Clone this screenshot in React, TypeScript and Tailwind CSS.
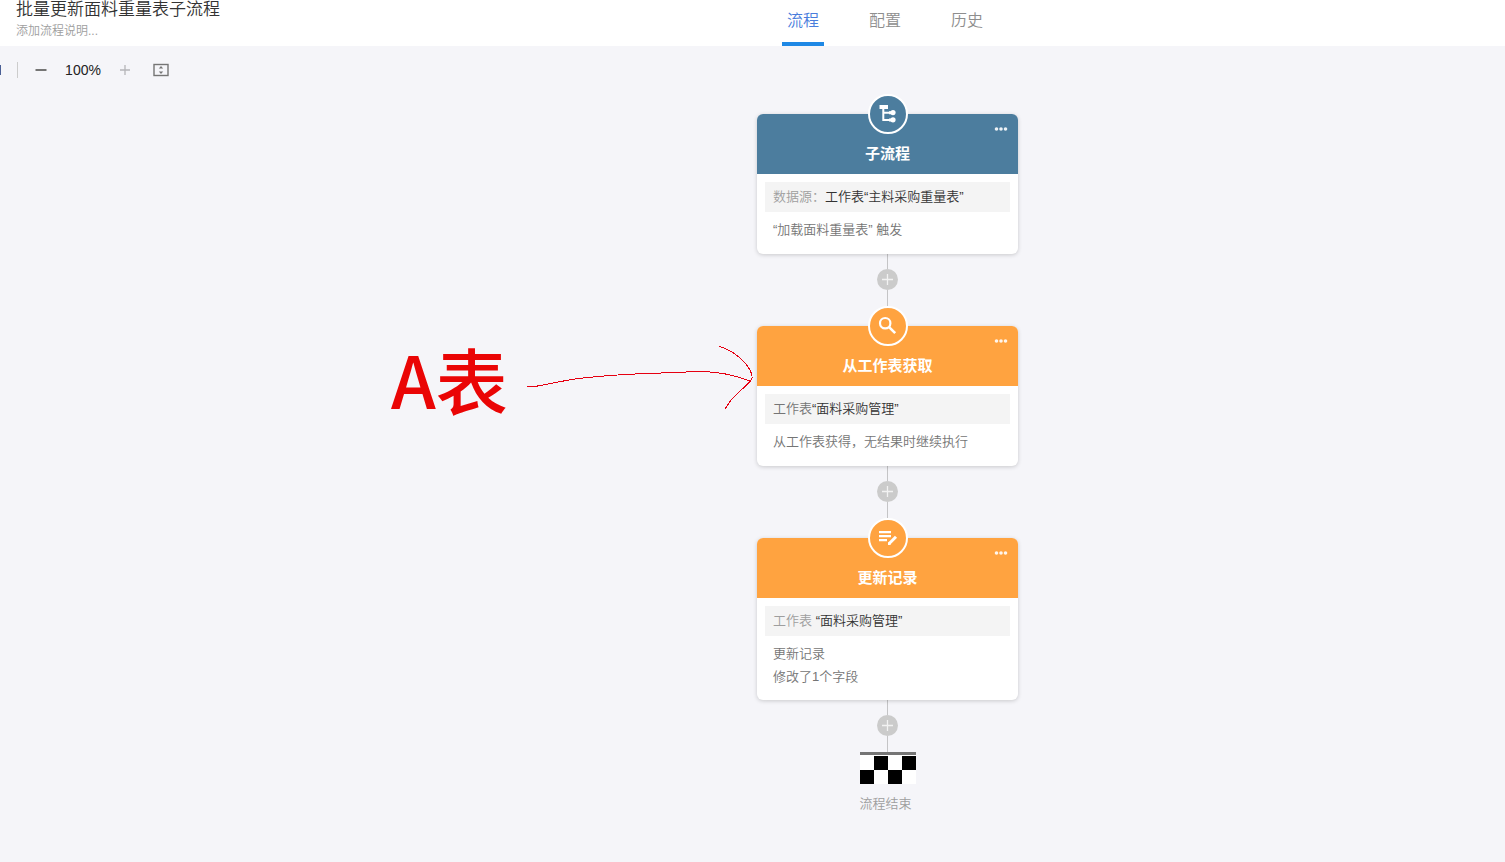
import React from "react";

type Tone = "blue" | "orange";

const toneClass: Record<Tone, string> = {
  blue: "bg-[#4c7d9e]",
  orange: "bg-[#ffa340]",
};

function SubprocessIcon() {
  return (
    <svg width="20" height="20" viewBox="0 0 20 20" fill="none" aria-hidden="true">
      <path d="M1.500 1h8.500v4H1.500z" fill="white" />
      <path d="M5.300 4v12H14M5.300 8.800H14" stroke="white" strokeWidth="2" />
      <circle cx="15" cy="8.600" r="2.600" fill="white" />
      <circle cx="15" cy="15.800" r="2.600" fill="white" />
      <path d="M11 7.200h4v3h-4zM11 14.400h4v3h-4z" fill="white" />
    </svg>
  );
}

function SearchIcon() {
  return (
    <svg width="20" height="20" viewBox="0 0 20 20" fill="none" aria-hidden="true">
      <circle cx="7.200" cy="7.200" r="5.200" stroke="white" strokeWidth="2.200" />
      <path d="M10.800 10.800l6.400 6.400" stroke="white" strokeWidth="2.600" />
    </svg>
  );
}

function EditIcon() {
  return (
    <svg width="20" height="20" viewBox="0 0 20 20" fill="none" aria-hidden="true">
      <path d="M1 4.200h12M1 8.200h12M1 12.200h8" stroke="white" strokeWidth="2.200" />
      <path d="M11 15.800l7-7" stroke="white" strokeWidth="3" />
      <path d="M10 17v-3l3 3z" fill="white" />
    </svg>
  );
}

function Connector() {
  return (
    <div className="flex h-[52px] flex-col items-center">
      <div className="h-[15px] w-px bg-[#c4c4c6]" />
      <button type="button" aria-label="添加节点" className="flex size-[21px] items-center justify-center rounded-full bg-[#cbcbcb]">
        <svg width="11" height="11" viewBox="0 0 11 11" aria-hidden="true">
          <path d="M5.500 0v11M0 5.500h11" stroke="#f2f2f2" strokeWidth="1.300" />
        </svg>
      </button>
      <div className="w-px grow bg-[#c4c4c6]" />
    </div>
  );
}

interface NodeProps {
  tone: Tone;
  icon: React.ReactNode;
  title: string;
  source: React.ReactNode;
  children: React.ReactNode;
}

function FlowNode({ tone, icon, title, source, children }: NodeProps) {
  return (
    <section className="relative w-[261px] rounded-md bg-white shadow-[0_1px_4px_rgba(0,0,0,0.18)]">
      <header className={`flex h-[60px] items-end justify-center rounded-t-md pb-2 ${toneClass[tone]}`}>
        <h2 className="text-[15px] leading-6 font-bold text-white">{title}</h2>
      </header>
      <div className={`absolute -top-5 left-1/2 flex size-10 -translate-x-1/2 items-center justify-center rounded-full border-2 border-white ${toneClass[tone]}`}>
        {icon}
      </div>
      <button type="button" aria-label="更多" className="absolute top-[7px] right-2 flex h-4 w-[18px] items-center justify-center">
        <svg width="14" height="4" viewBox="0 0 14 4" fill="#fff" fillOpacity="0.9" aria-hidden="true">
          <circle cx="2.500" cy="2" r="1.800" />
          <circle cx="7" cy="2" r="1.800" />
          <circle cx="11.500" cy="2" r="1.800" />
        </svg>
      </button>
      <div className="min-h-20 px-2 pt-2 pb-3 text-[13px]">
        <p className="h-[30px] bg-[#f4f4f4] px-2 leading-[30px] text-[#333]">{source}</p>
        <div className="px-2 pt-[6px] leading-[23px] text-[#757575]">{children}</div>
      </div>
    </section>
  );
}

function Annotation() {
  return (
    <div className="absolute top-5 right-full flex w-[370px]">
      <span className="absolute top-0 left-1 font-['Noto_Sans_CJK_SC'] text-[72px] leading-[104px] font-medium whitespace-nowrap text-[#ea0505]">A表</span>
      <svg className="absolute top-4 right-0" width="234" height="72" viewBox="0 0 234 72" fill="none" stroke="#e60012" shapeRendering="crispEdges" aria-hidden="true">
        <path d="M4 44.500H12L30 41C45 38 55 36 70 35C100 32 130 31 160 30.500L168 29L180 29.500C198 30 212 33 228 39.500" />
        <path d="M196 4.500C210 8 222 19 227 28C230 34 230 37 226 40.500L208 58L202 67" />
      </svg>
    </div>
  );
}

export default function App() {
  return (
    <div lang="zh-CN" className="flex min-h-screen flex-col bg-[#f5f5f9] font-['Liberation_Sans','Noto_Sans_CJK_SC',sans-serif] font-[350] text-[#333]">
      <header className="flex h-[46px] bg-white">
        <div className="w-[265px] shrink-0 pl-4">
          <h1 className="-mt-[3px] text-[17px] leading-[26px] font-[350] whitespace-nowrap text-[#333]">批量更新面料重量表子流程</h1>
          <p className="text-xs leading-4 text-[#9e9e9e]">添加流程说明...</p>
        </div>
        <nav className="flex grow justify-center gap-10 text-base">
          <a href="#flow" className="flex h-[46px] w-[42px] justify-center border-b-4 border-[#1e88e5] leading-[42px] text-[#4a7ddc]">流程</a>
          <a href="#config" className="flex h-[46px] w-[42px] justify-center leading-[42px] text-[#8e8e8e]">配置</a>
          <a href="#history" className="flex h-[46px] w-[42px] justify-center leading-[42px] text-[#8e8e8e]">历史</a>
        </nav>
      </header>

      <div className="flex h-12 items-center">
        <span className="h-[10px] w-px bg-[#4a5f95]" />
        <span className="ml-4 h-4 w-px bg-[#ccc]" />
        <button type="button" aria-label="缩小" className="ml-[17px] flex h-6 w-3 items-center justify-center">
          <svg width="12" height="12" viewBox="0 0 12 12" aria-hidden="true">
            <path d="M0.500 6h11" stroke="#757575" strokeWidth="2" />
          </svg>
        </button>
        <span className="w-[72px] text-center text-sm text-[#222]">100%</span>
        <button type="button" aria-label="放大" className="flex h-6 w-3 items-center justify-center">
          <svg width="12" height="12" viewBox="0 0 12 12" aria-hidden="true">
            <path d="M1 6h10M6 1v10" stroke="#b5b5b9" strokeWidth="1.300" />
          </svg>
        </button>
        <button type="button" aria-label="适应画布" className="ml-[22px] flex h-6 w-4 items-center justify-center">
          <svg width="16" height="14" viewBox="0 0 16 14" fill="none" aria-hidden="true">
            <rect x="1" y="1.500" width="14" height="11" stroke="#757575" strokeWidth="1.400" />
            <path d="M8 3l2.200 2.500H5.800zM8 11l2.200-2.500H5.800z" fill="#757575" />
          </svg>
        </button>
      </div>

      <main className="flex flex-col items-center pt-5 pb-12 pl-[270px]">
        <FlowNode
          tone="blue"
          icon={<SubprocessIcon />}
          title="子流程"
          source={<><span className="text-[#9e9e9e]">数据源：</span>工作表“主料采购重量表”</>}
        >
          <p>“加载面料重量表” 触发</p>
        </FlowNode>
        <Connector />
        <div className="relative pt-5">
          <FlowNode
            tone="orange"
            icon={<SearchIcon />}
            title="从工作表获取"
            source={<><span className="text-[#757575]">工作表</span>“面料采购管理”</>}
          >
            <p>从工作表获得，无结果时继续执行</p>
          </FlowNode>
          <Annotation />
        </div>
        <Connector />
        <div className="pt-5">
          <FlowNode
            tone="orange"
            icon={<EditIcon />}
            title="更新记录"
            source={<><span className="text-[#9e9e9e]">工作表 </span>“面料采购管理”</>}
          >
            <p>更新记录</p>
            <p>修改了1个字段</p>
          </FlowNode>
        </div>
        <Connector />
        <div className="flex w-14 flex-col">
          <svg width="56" height="32" viewBox="0 0 56 32" shapeRendering="crispEdges" aria-hidden="true">
            <path d="M0 0h56v32H0z" fill="#fff" />
            <path d="M0 0h56v3H0z" fill="#757575" />
            <path d="M14 4h14v14H14zM42 4h14v14H42zM0 18h14v14H0zM28 18h14v14H28z" fill="#000" />
          </svg>
          <p className="mt-2 text-[13px] leading-6 whitespace-nowrap text-[#9e9e9e]">流程结束</p>
        </div>
      </main>
    </div>
  );
}
